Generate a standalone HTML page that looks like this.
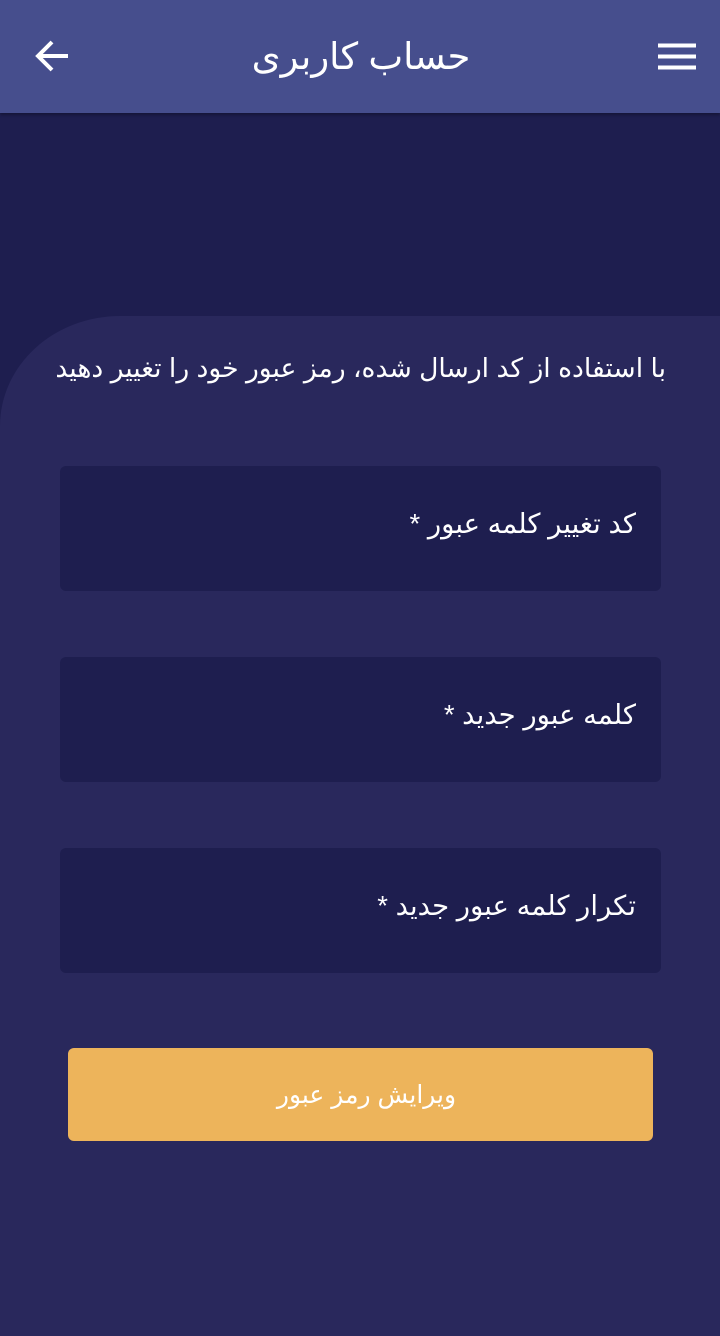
<!DOCTYPE html>
<html><head><meta charset="utf-8"><style>
*{margin:0;padding:0;box-sizing:border-box}
body{width:720px;height:1336px;background:#1e1e4f;font-family:"Liberation Sans","DejaVu Sans",sans-serif;color:#fff;position:relative;overflow:hidden}
.hdr{position:absolute;left:0;top:0;width:720px;height:113px;background:#464e8d;box-shadow:0 2px 3px rgba(0,0,0,.3)}
.title{position:absolute;left:0;right:0;top:35px;text-align:center;font-size:37px;direction:rtl;padding-left:2px}
.card{position:absolute;left:0;top:316px;width:720px;height:1020px;background:#29285c;border-top-left-radius:120px 110px}
.sub{position:absolute;right:54px;top:353px;font-size:26.6px;direction:rtl;white-space:nowrap}
.inp{position:absolute;left:60px;width:601px;height:125px;background:#1e1e4f;border-radius:6px}
.inp span{position:absolute;right:25px;top:42px;font-size:27.5px;direction:rtl;white-space:nowrap}
.btn{position:absolute;left:68px;top:1048px;width:585px;height:93px;background:#edb45b;border-radius:6px;text-align:center;line-height:94px;font-size:25px;direction:rtl;padding-left:12px}
</style></head><body>
<div class="hdr">
<svg style="position:absolute;left:34px;top:38px" width="36" height="36" viewBox="0 0 36 36"><path d="M34 18H4M18 4L4 18l14 14" stroke="#fff" stroke-width="4" fill="none"/></svg>
<div class="title">حساب کاربری</div>
<svg style="position:absolute;left:658px;top:43px" width="38" height="28" viewBox="0 0 38 28"><path d="M0 2.5h38M0 13.5h38M0 24.5h38" stroke="#fff" stroke-width="4"/></svg>
</div>
<div class="card"></div>
<div class="sub">با استفاده از کد ارسال شده، رمز عبور خود را تغییر دهید</div>
<div class="inp" style="top:466px"><span>کد تغییر کلمه عبور *</span></div>
<div class="inp" style="top:657px"><span>کلمه عبور جدید *</span></div>
<div class="inp" style="top:848px"><span>تکرار کلمه عبور جدید *</span></div>
<div class="btn">ویرایش رمز عبور</div>
</body></html>
